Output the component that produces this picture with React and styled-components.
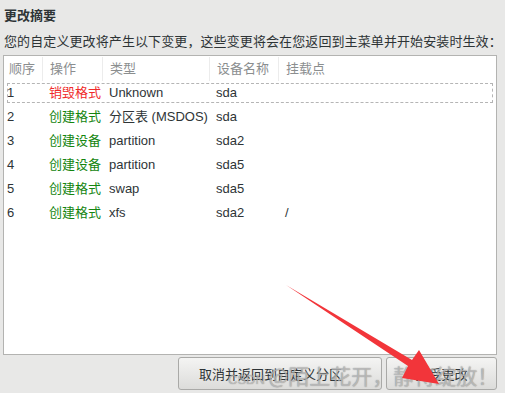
import styled, { createGlobalStyle } from "styled-components";

const cjk = `"Noto Sans CJK SC", "Liberation Sans", sans-serif`;

const Global = createGlobalStyle`
  html, body { margin: 0; padding: 0; }
  body {
    background: #e8e8e7;
    font-family: "Liberation Sans", "Noto Sans CJK SC", sans-serif;
    font-size: 13px;
    color: #2e3436;
  }
`;

const Page = styled.div`
  position: relative;
  width: 505px;
  height: 393px;
  overflow: hidden;
  padding: 0 8px 0 3px;
  box-sizing: border-box;
  display: flex;
  flex-direction: column;
`;

const Heading = styled.div`
  font-family: ${cjk};
  font-weight: bold;
  margin: 6px 0 0 1px;
  height: 18px;
  line-height: 18px;
`;

const Intro = styled.div`
  font-family: ${cjk};
  margin: 8px 0 0 1px;
  height: 18px;
  line-height: 18px;
  white-space: nowrap;
  letter-spacing: 0.1px;
`;

const Panel = styled.div`
  margin-top: 5px;
  height: 300px;
  background: #fff;
  border: 1px solid #b3b3b1;
  box-sizing: border-box;
  padding-top: 1px;
`;

const cols = "39px 60px 107px 69px 1fr";

const HeadRow = styled.div`
  display: grid;
  grid-template-columns: ${cols};
  height: 24px;
  line-height: 24px;
  color: #8b8e8f;
`;

const HeadCell = styled.div`
  padding-left: ${(p) => (p.$first ? 5 : 7)}px;
  border-left: ${(p) => (p.$first ? "none" : "1px solid #ececec")};
  margin-left: ${(p) => (p.$first ? 0 : -1)}px;
`;

const Row = styled.div`
  display: grid;
  grid-template-columns: ${cols};
  height: 24px;
  line-height: 24px;
  margin: 0 1px;
  outline: ${(p) => (p.$focus ? "1px dashed #b5b5b5" : "none")};
  outline-offset: -3px;
`;

const Cell = styled.div`
  padding-left: ${(p) => (p.$first ? 2 : 5)}px;
  color: ${(p) => p.$color || "#2e3436"};
  white-space: nowrap;
`;

const Buttons = styled.div`
  display: flex;
  justify-content: flex-end;
  gap: 4px;
  margin-top: 2px;
`;

const Button = styled.div`
  width: ${(p) => p.$w}px;
  height: 33px;
  box-sizing: border-box;
  border: 1px solid #a9a9a7;
  border-radius: 3px;
  background: linear-gradient(#f4f4f3, #dcdcda);
  display: flex;
  align-items: center;
  justify-content: ${(p) => (p.$pad ? "flex-start" : "center")};
  padding-left: ${(p) => p.$pad || 0}px;
  font-family: ${cjk};
  color: #2e3436;
`;

const Watermark = styled.div`
  position: absolute;
  left: 228px;
  top: 361px;
  height: 28px;
  display: flex;
  align-items: baseline;
  white-space: nowrap;
  font-family: ${cjk};
  color: rgba(215, 215, 215, 0.6);
  text-shadow: 0 0 1px rgba(80, 80, 80, 0.7);
  pointer-events: none;
`;

const MarkBrand = styled.span`
  font-family: "Liberation Sans", sans-serif;
  font-size: 13px;
  white-space: pre;
`;

const MarkName = styled.span`
  font-size: 21px;
  line-height: 28px;
`;

const Arrow = styled.svg`
  position: absolute;
  left: 0;
  top: 0;
  pointer-events: none;
`;

const rows = [
  ["1", "销毁格式", "Unknown", "sda", "", "#ef2929"],
  ["2", "创建格式", "分区表 (MSDOS)", "sda", "", "#14850f"],
  ["3", "创建设备", "partition", "sda2", "", "#14850f"],
  ["4", "创建设备", "partition", "sda5", "", "#14850f"],
  ["5", "创建格式", "swap", "sda5", "", "#14850f"],
  ["6", "创建格式", "xfs", "sda2", "/", "#14850f"],
];

const App = () => {
  return (
    <Page>
      <Global />
      <Heading>更改摘要</Heading>
      <Intro>您的自定义更改将产生以下变更，这些变更将会在您返回到主菜单并开始安装时生效：</Intro>
      <Panel>
        <HeadRow>
          <HeadCell $first>顺序</HeadCell>
          <HeadCell>操作</HeadCell>
          <HeadCell>类型</HeadCell>
          <HeadCell>设备名称</HeadCell>
          <HeadCell>挂载点</HeadCell>
        </HeadRow>
        {rows.map((r, i) => (
          <Row key={r[0]} $focus={i === 0}>
            <Cell $first>{r[0]}</Cell>
            <Cell $color={r[5]}>{r[1]}</Cell>
            <Cell>{r[2]}</Cell>
            <Cell>{r[3]}</Cell>
            <Cell>{r[4]}</Cell>
          </Row>
        ))}
      </Panel>
      <Buttons>
        <Button $w={204} $pad={20}>取消并返回到自定义分区</Button>
        <Button $w={111}>接受更改</Button>
      </Buttons>
      <Watermark>
        <MarkBrand>CSDN </MarkBrand>
        <MarkName>@陌上花开，静待绽放！</MarkName>
      </Watermark>
      <Arrow width="505" height="393" viewBox="0 0 505 393">
        <polygon
          points="286,285 412,360 419,350 439,384 402,378 408,366"
          fill="#f2353a"
        />
      </Arrow>
    </Page>
  );
};

export default App;
